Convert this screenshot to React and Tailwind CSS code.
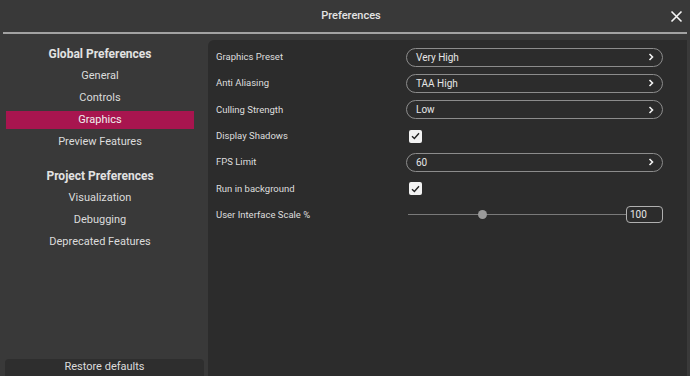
import { useState } from "react";

const globalItems = ["General", "Controls", "Graphics", "Preview Features"];
const projectItems = ["Visualization", "Debugging", "Deprecated Features"];

function Chevron() {
  return (
    <svg width="6" height="8" viewBox="0 0 6 8" className="shrink-0">
      <path d="M1.5 1 L4.5 4 L1.5 7" fill="none" stroke="#f2f2f2" strokeWidth="1.6" />
    </svg>
  );
}

function Dropdown({ value }) {
  return (
    <div className="w-[257px] h-[19px] rounded-full border border-[#8c8c8c] flex items-center justify-between pl-[9px] pr-[8px]">
      <span className="text-[10px] text-[#e6e6e6]">{value}</span>
      <Chevron />
    </div>
  );
}

function Checkbox() {
  return (
    <div className="ml-[3px] w-[13px] h-[13px] rounded-[2px] bg-[#f2f2f2] flex items-center justify-center">
      <svg width="9" height="8" viewBox="0 0 9 8">
        <path d="M1 4.2 L3.4 6.5 L8 1.3" fill="none" stroke="#222" strokeWidth="1.4" />
      </svg>
    </div>
  );
}

function Slider({ value }) {
  return (
    <div className="w-[257px] flex items-center">
      <div className="flex-1 relative h-[9px] flex items-center pl-[2px]">
        <div className="h-[1px] w-full bg-[#7a7a7a]" />
        <div className="absolute left-[72px] top-0 w-[9px] h-[9px] rounded-full bg-[#9a9a9a]" />
      </div>
      <div className="w-[37px] h-[17px] rounded-[4px] border border-[#b0b0b0] flex items-center pl-[3px] text-[10px] text-[#e6e6e6]">
        {value}
      </div>
    </div>
  );
}

const rows = [
  { label: "Graphics Preset", control: <Dropdown value="Very High" /> },
  { label: "Anti Aliasing", control: <Dropdown value="TAA High" /> },
  { label: "Culling Strength", control: <Dropdown value="Low" /> },
  { label: "Display Shadows", control: <Checkbox /> },
  { label: "FPS Limit", control: <Dropdown value="60" /> },
  { label: "Run in background", control: <Checkbox /> },
  { label: "User Interface Scale %", control: <Slider value="100" /> },
];

export default function App() {
  const [active, setActive] = useState("Graphics");

  const navItem = (name) => (
    <div key={name} className="h-[22px] flex items-center">
      <button
        onClick={() => setActive(name)}
        className={`w-full h-[18px] flex items-center justify-center text-[11px] ${
          active === name ? "bg-[#a8154f] text-[#f0f0f0]" : "text-[#dcdcdc]"
        }`}
      >
        {name}
      </button>
    </div>
  );

  return (
    <div className="w-[690px] h-[376px] bg-[#393939] flex flex-col overflow-hidden font-['Roboto',sans-serif]">
      {/* Title bar */}
      <div className="h-[32px] flex items-center justify-between pl-[20px] pr-[7px]">
        <div className="w-[12px]" />
        <span className="text-[11px] font-medium text-[#e4e4e4]">Preferences</span>
        <svg width="13" height="13" viewBox="0 0 13 13">
          <path d="M1.5 1.5 L11.5 11.5 M11.5 1.5 L1.5 11.5" stroke="#f5f5f5" strokeWidth="1.6" />
        </svg>
      </div>
      <div className="mx-[3px] h-[2px] bg-[#a2a2a2]" />

      <div className="flex flex-1 min-h-0">
        {/* Sidebar */}
        <div className="w-[208px] flex flex-col">
          <div className="flex-1 pl-[6px] pr-[14px] pt-[12px]">
            <div className="h-[16px] mb-[3px] flex items-center justify-center text-[12px] font-bold text-[#e2e2e2]">
              Global Preferences
            </div>
            {globalItems.map(navItem)}
            <div className="h-[16px] mt-[15px] mb-[3px] flex items-center justify-center text-[12px] font-bold text-[#e2e2e2]">
              Project Preferences
            </div>
            {projectItems.map(navItem)}
          </div>
          <button className="ml-[5px] mr-[4px] h-[17px] rounded-t-[4px] bg-[#2e2e2e] text-[11px] text-[#dcdcdc] flex items-center justify-center">
            Restore defaults
          </button>
        </div>

        {/* Settings panel */}
        <div className="flex-1 mt-[6px] mr-[2px] bg-[#2c2c2c] rounded-tl-[6px] border-r border-[#3a3a3a] pl-[8px] pt-[4px]">
          {rows.map((r) => (
            <div key={r.label} className="h-[26.3px] flex items-center">
              <div className="w-[190px] text-[9.5px] text-[#dedede]">{r.label}</div>
              {r.control}
            </div>
          ))}
        </div>
      </div>
    </div>
  );
}
